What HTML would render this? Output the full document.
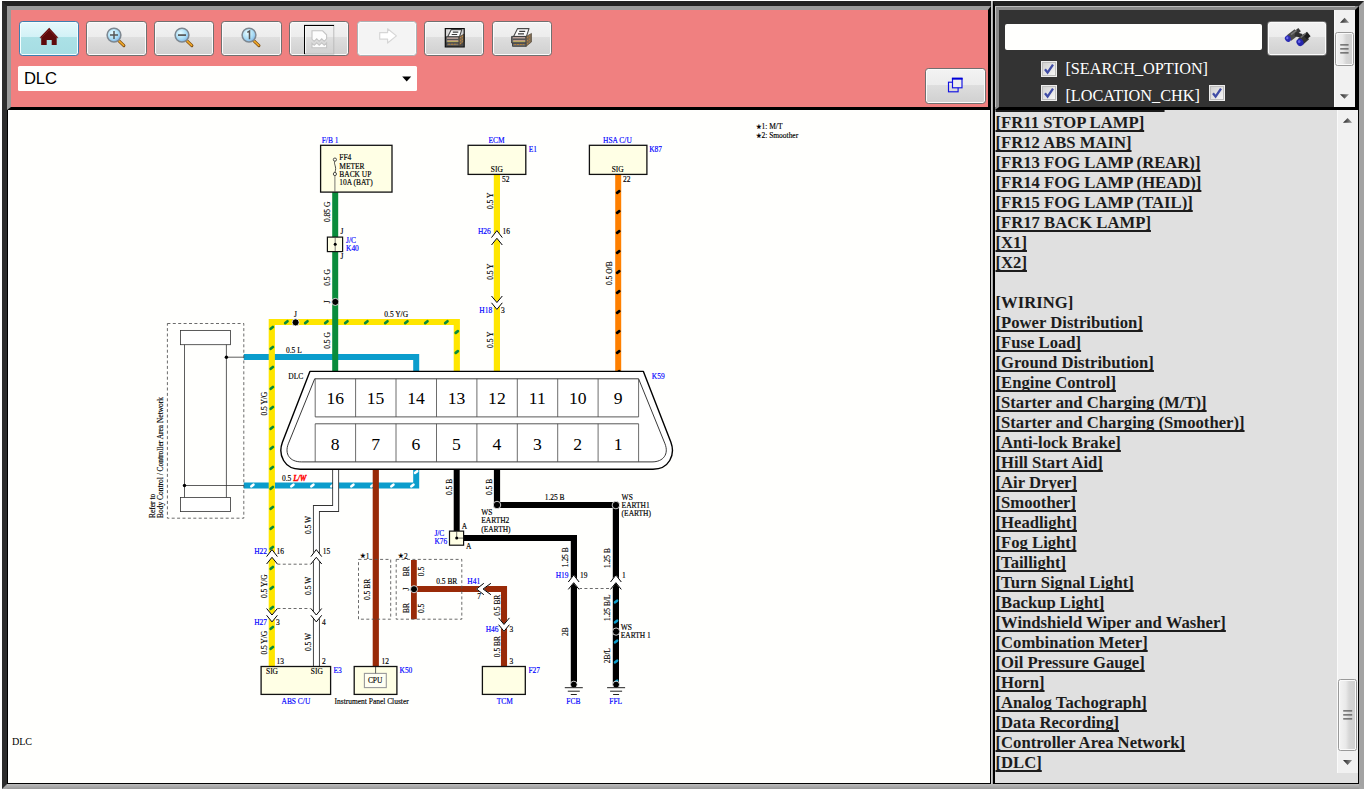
<!DOCTYPE html>
<html><head><meta charset="utf-8"><title>DLC</title><style>
html,body{margin:0;padding:0}
body{width:1366px;height:791px;position:relative;overflow:hidden;background:#fff;font-family:"Liberation Serif",serif}
.a{position:absolute}
.btn{position:absolute;box-sizing:border-box;width:60px;height:35px;top:21px;border:1px solid #707070;border-radius:3.5px;
 background:linear-gradient(#f3f3f3 0,#ececec 46%,#dedede 47%,#d0d0d0 100%);box-shadow:inset 0 0 0 1px #fbfbfb}
.btn svg{position:absolute;left:0;top:0}
.btn.hot{border-color:#3c7fb1;background:linear-gradient(#e6f9fc 0,#d2f1f6 46%,#abe1e6 47%,#a6dde3 100%);box-shadow:inset 0 0 0 1px #f4fdfe}
.btn.dis{border-color:#adb2b5;background:#f4f4f4;box-shadow:inset 0 0 0 1px #fcfcfc}
#list{position:absolute;left:995px;top:110px;width:363px;height:673px;background:#e0e0e0;overflow:hidden}
#list div{position:absolute;left:0.5px;white-space:nowrap;font:bold 16.67px/20px "Liberation Serif",serif;color:#1c1c1c;height:20px}
#list a{color:#1c1c1c;text-decoration:underline;text-decoration-thickness:1.5px;text-underline-offset:2.4px;text-decoration-skip-ink:none}
.lbl{position:absolute;color:#fff;font:16.25px/18px "Liberation Serif",serif;white-space:nowrap}
.cb{position:absolute;width:12px;height:12px;border:1px solid #bdbdbd;background:linear-gradient(135deg,#d2d2d2,#f6f6f6);outline:1px solid #ededed}
.sb{position:absolute;background:#f1f1f1;border-left:1px solid #fafafa;box-sizing:border-box}
.th{position:absolute;box-sizing:border-box;border:1px solid #9a9a9a;border-radius:2.5px;background:linear-gradient(90deg,#f4f4f4 0,#e9e9e9 40%,#d6d6d6 60%,#cfcfcf 100%);box-shadow:inset 0 0 0 1px #fafafa}
</style></head><body>
<div class="a" style="box-sizing:border-box;left:2px;top:1px;width:988.6px;height:788px;border-left:5.5px solid #2c2c2c;border-top:5px solid #222;border-bottom:5px solid #a6a6a6;background:#000"></div>
<div class="a" style="left:990.6px;top:1px;width:2.4px;height:788px;background:linear-gradient(90deg,#fff 0,#b5b5b5 35%,#a9a9a9)"></div>
<div class="a" style="left:990.6px;top:784px;width:2.4px;height:5px;background:#a6a6a6"></div>
<div class="a" style="box-sizing:border-box;left:993px;top:1px;width:371px;height:788px;border-left:2px solid #000;border-top:5px solid #222;border-right:5px solid #a3a3a3;border-bottom:5px solid #a6a6a6;background:#000"></div>
<div class="a" style="left:7px;top:784.2px;width:1352px;height:4.8px;background:linear-gradient(#bcbcbc,#989898)"></div>
<div class="a" style="box-sizing:border-box;left:7px;top:6px;width:983.5px;height:104px;border-top:4px solid #9a9a9a;border-left:4px solid #9a9a9a;border-bottom:3px solid #000;border-right:3.5px solid #000;background:#f08080"></div>
<div class="a" style="left:7.5px;top:110px;width:982.9px;height:673.4px;background:#fffffd"></div>
<div class="a" style="box-sizing:border-box;left:995px;top:6px;width:364px;height:104px;border-top:4px solid #8a8a8a;border-left:4px solid #8a8a8a;border-bottom:3px solid #000;border-right:4px solid #000;background:#333"></div>
<div class="a" style="left:995px;top:6px;width:1px;height:101px;background:#c4c4c4"></div>
<div class="a" style="left:995px;top:6px;width:360px;height:0.8px;background:#bdbdbd"></div>
<div class="btn hot" style="left:19.1px;width:59.8px"><svg width="60" height="35" viewBox="0 0 60 35"><g transform="translate(-0.8,-0.9)"><path d="M30 6.6 L20.3 16.6 H22 V24 H27.5 V18.8 H32.5 V24 H37.5 V16.6 H39.2 Z" fill="#5e0b0b"/><path d="M30 8.6 L21.6 17.2 M30 8.6 L38.4 17.2" stroke="#8a2a2a" stroke-width="0.8" fill="none"/></g></svg></div>
<div class="btn" style="left:86.4px;width:60.3px"><svg width="60" height="35" viewBox="0 0 60 35"><defs><radialGradient id="lg" cx="0.4" cy="0.35" r="0.7"><stop offset="0" stop-color="#e6fbff"/><stop offset="0.6" stop-color="#a9dcf5"/><stop offset="1" stop-color="#7fb2e6"/></radialGradient></defs><g transform="translate(-1.3,-0.9)"><line x1="33" y1="19.5" x2="38.2" y2="24.5" stroke="#7a4a10" stroke-width="3" stroke-linecap="round"/><line x1="33" y1="19.5" x2="38" y2="24.3" stroke="#f0a828" stroke-width="1.6" stroke-linecap="round"/><circle cx="28.3" cy="14" r="6.9" fill="url(#lg)" stroke="#7d8790" stroke-width="1.5"/><path d="M24.3 14 H32.3 M28.3 10 V18" stroke="#555" stroke-width="1.5"/></g></svg></div>
<div class="btn" style="left:154.1px;width:59.8px"><svg width="60" height="35" viewBox="0 0 60 35"><defs><radialGradient id="lg" cx="0.4" cy="0.35" r="0.7"><stop offset="0" stop-color="#e6fbff"/><stop offset="0.6" stop-color="#a9dcf5"/><stop offset="1" stop-color="#7fb2e6"/></radialGradient></defs><g transform="translate(-1.3,-0.9)"><line x1="33" y1="19.5" x2="38.2" y2="24.5" stroke="#7a4a10" stroke-width="3" stroke-linecap="round"/><line x1="33" y1="19.5" x2="38" y2="24.3" stroke="#f0a828" stroke-width="1.6" stroke-linecap="round"/><circle cx="28.3" cy="14" r="6.9" fill="url(#lg)" stroke="#7d8790" stroke-width="1.5"/><path d="M24.3 14 H32.3" stroke="#555" stroke-width="1.7"/></g></svg></div>
<div class="btn" style="left:221.4px;width:60.3px"><svg width="60" height="35" viewBox="0 0 60 35"><defs><radialGradient id="lg" cx="0.4" cy="0.35" r="0.7"><stop offset="0" stop-color="#e6fbff"/><stop offset="0.6" stop-color="#a9dcf5"/><stop offset="1" stop-color="#7fb2e6"/></radialGradient></defs><g transform="translate(-1.3,-0.9)"><line x1="33" y1="19.5" x2="38.2" y2="24.5" stroke="#7a4a10" stroke-width="3" stroke-linecap="round"/><line x1="33" y1="19.5" x2="38" y2="24.3" stroke="#f0a828" stroke-width="1.6" stroke-linecap="round"/><circle cx="28.3" cy="14" r="6.9" fill="url(#lg)" stroke="#7d8790" stroke-width="1.5"/><path d="M26.6 11.2 L28.8 10 V18.2" stroke="#555" stroke-width="1.5" fill="none"/></g></svg></div>
<div class="btn" style="left:289.2px;width:59.6px"><svg width="60" height="35" viewBox="0 0 60 35"><rect x="14.5" y="3" width="29.3" height="29" fill="none" stroke="#bdbdbd" stroke-width="1"/><path d="M15.6 31 V4.1 H43" stroke="#fafafa" stroke-width="1" fill="none"/><path d="M14.6 32 V3.1 H43.8" stroke="#000" stroke-width="1.2" fill="none" shape-rendering="crispEdges"/><path d="M22 8.8 H32.6 L36.6 12.8 V16.8 L34.2 19.3 L31.7 16.8 L29.2 19.3 L26.7 16.8 L24.2 19.3 L22 17.3 Z" fill="#fdfdfd" stroke="#c4c4c4" stroke-width="1.1"/><path d="M22 25.8 V21.3 L24.2 23.3 L26.7 20.8 L29.2 23.3 L31.7 20.8 L34.2 23.3 L36.6 20.8 V25.8 Z" fill="#fdfdfd" stroke="#c4c4c4" stroke-width="1.1"/></svg></div>
<div class="btn dis" style="left:356.5px;width:60.2px"><svg width="60" height="35" viewBox="0 0 60 35"><path d="M21.7 10.6 H29.6 V6.8 L38.4 13.9 L29.6 21 V17.2 H21.7 Z" fill="#fff" stroke="#d6d6d6" stroke-width="1.2" stroke-linejoin="round"/></svg></div>
<div class="btn" style="left:424.2px;width:59.6px"><svg width="60" height="35" viewBox="0 0 60 35"><defs><linearGradient id="pf" x1="0" x2="1"><stop offset="0" stop-color="#cfcfcf"/><stop offset="0.5" stop-color="#fafafa"/><stop offset="1" stop-color="#c9c9c9"/></linearGradient></defs><rect x="20.3" y="6.6" width="18.9" height="18.3" fill="url(#pf)"/><rect x="20.6" y="15" width="18.3" height="9.6" fill="#4a4a4a"/><path d="M26.3 7.6 L36.8 7.6 L34.4 15.0 L22.6 15.0 Z" fill="#fbfbfb" stroke="#4a4a4a" stroke-width="1.1" stroke-linejoin="round"/><path d="M27.8 10.2 L33.3 10.2 M26.7 12.5 L32.2 12.5" stroke="#3c3c3c" stroke-width="1.2"/><path d="M20.8 14.8 H34.2 V23.9 H21.6 V20.9 H20.8 Z" fill="#6e6e6e" stroke="#3a3a3a" stroke-width="0.9"/><path d="M34.2 14.8 L39.1 12.1 L39.1 19.9 L34.2 23.9 Z" fill="#7d6a52" stroke="#4a4030" stroke-width="0.6"/><path d="M35.2 15.7 L38.3 13.9 M35.2 18.9 L38.3 16.7 M35.2 21.8 L38.3 19.0" stroke="#d08a38" stroke-width="1" stroke-dasharray="1.1 1.1"/><path d="M22.1 16.1 H33.1" stroke="#e6c0b4" stroke-width="0.9"/><path d="M21.9 17.5 H33.5" stroke="#4e4e4e" stroke-width="0.9"/><path d="M22.3 18.8 H33.3" stroke="#e0aa8a" stroke-width="0.9"/><path d="M22.3 19.6 H33.3" stroke="#c4b860" stroke-width="0.9"/><path d="M21.4 21.0 H33.9" stroke="#333" stroke-width="0.9"/><path d="M23.2 22.3 H32.4" stroke="#b8803a" stroke-width="1.1" stroke-dasharray="2 0.8"/><rect x="20.3" y="6.6" width="18.9" height="18.3" fill="none" stroke="#0c0c0c" stroke-width="1.2"/></svg></div>
<div class="btn" style="left:491.5px;width:60.2px"><svg width="60" height="35" viewBox="0 0 60 35"><path d="M24.6 6.6 L36.0 6.6 L33.4 14.6 L20.6 14.6 Z" fill="#fbfbfb" stroke="#4a4a4a" stroke-width="1.1" stroke-linejoin="round"/><path d="M26.2 9.4 L32.2 9.4 M25.0 11.9 L31.0 11.9" stroke="#3c3c3c" stroke-width="1.2"/><path d="M18.6 14.4 H33.2 V24.3 H19.5 V21.0 H18.6 Z" fill="#6e6e6e" stroke="#3a3a3a" stroke-width="0.9"/><path d="M33.2 14.4 L38.5 11.4 L38.5 19.9 L33.2 24.3 Z" fill="#7d6a52" stroke="#4a4030" stroke-width="0.6"/><path d="M34.2 15.4 L37.6 13.4 M34.2 18.8 L37.6 16.4 M34.2 22.0 L37.6 19.0" stroke="#d08a38" stroke-width="1" stroke-dasharray="1.1 1.1"/><path d="M20.0 15.8 H32.0" stroke="#e6c0b4" stroke-width="0.9"/><path d="M19.8 17.3 H32.4" stroke="#4e4e4e" stroke-width="0.9"/><path d="M20.2 18.7 H32.2" stroke="#e0aa8a" stroke-width="0.9"/><path d="M20.2 19.6 H32.2" stroke="#c4b860" stroke-width="0.9"/><path d="M19.2 21.1 H32.8" stroke="#333" stroke-width="0.9"/><path d="M21.2 22.5 H31.2" stroke="#b8803a" stroke-width="1.1" stroke-dasharray="2 0.8"/></svg></div>
<div class="a" style="left:18px;top:66.2px;width:398.5px;height:24.5px;background:#fffffd;border-radius:1.5px"></div>
<div class="a" style="left:23.9px;top:66.5px;height:24px;font:16.6px/24.6px 'Liberation Sans',sans-serif;color:#000">DLC</div>
<svg class="a" style="left:401px;top:75px" width="12" height="8" viewBox="0 0 12 8"><path d="M1.2 1.5 H10.2 L5.7 6.5 Z" fill="#000"/></svg>
<div class="btn" style="left:925.4px;top:68.3px;height:35.4px;width:60.4px"><svg width="60" height="35" viewBox="0 0 60 35"><g transform="translate(-0.7,-1.0)"><rect x="23.2" y="14.2" width="9.6" height="9.6" fill="none" stroke="#1212e2" stroke-width="1.15"/><rect x="27.2" y="10.6" width="9.5" height="9.2" fill="#efefef" stroke="#1212e2" stroke-width="1.15"/><path d="M26.6 10.6 H37.3" stroke="#0000d8" stroke-width="2"/></g></svg></div>
<div class="a" style="left:1004.6px;top:24px;width:257px;height:26px;background:#fffffd;border-radius:2px"></div>
<div class="btn" style="left:1267.2px;top:21.2px;width:59.6px;height:34.6px"><svg width="60" height="35" viewBox="0 0 60 35"><path d="M21 16 L28.8 9.9" stroke="#4a4a4a" stroke-width="7"/><path d="M28.2 10.3 L31.6 7.6" stroke="#3a3a3a" stroke-width="4.2"/><path d="M27 12 L34 14" stroke="#2e2e2e" stroke-width="4"/><path d="M32.4 19.8 L38.6 14.4" stroke="#333" stroke-width="7.6"/><path d="M37 15.2 L40.8 12" stroke="#1c1c1c" stroke-width="5.6"/><path d="M23 12.6 L28.6 8.4" stroke="#777" stroke-width="1.4"/><path d="M32.6 15.6 L38 11.2" stroke="#6a6a6a" stroke-width="1.4"/><ellipse cx="19.9" cy="16.7" rx="2.9" ry="3.3" transform="rotate(-35 19.9 16.7)" fill="#2c2cb4"/><ellipse cx="32" cy="20.4" rx="3.4" ry="3.8" transform="rotate(-35 32 20.4)" fill="#2626ac"/><ellipse cx="19.3" cy="15.9" rx="1.1" ry="1.3" fill="#6e6eea"/><ellipse cx="31.2" cy="19.4" rx="1.3" ry="1.5" fill="#6464e6"/></svg></div>
<div class="cb" style="left:1042.1px;top:62px"><svg width="12" height="12" viewBox="1 1 12 12" style="position:absolute;left:0;top:0"><path d="M3 7.2 L5.6 10.6 L11 2.6" fill="none" stroke="#3f4ca6" stroke-width="2.3" stroke-linejoin="miter"/></svg></div>
<div class="cb" style="left:1042.1px;top:86px"><svg width="12" height="12" viewBox="1 1 12 12" style="position:absolute;left:0;top:0"><path d="M3 7.2 L5.6 10.6 L11 2.6" fill="none" stroke="#3f4ca6" stroke-width="2.3" stroke-linejoin="miter"/></svg></div>
<div class="cb" style="left:1210.1px;top:86px"><svg width="12" height="12" viewBox="1 1 12 12" style="position:absolute;left:0;top:0"><path d="M3 7.2 L5.6 10.6 L11 2.6" fill="none" stroke="#3f4ca6" stroke-width="2.3" stroke-linejoin="miter"/></svg></div>
<div class="lbl" style="left:1065.4px;top:59.7px">[SEARCH_OPTION]</div>
<div class="lbl" style="left:1065.4px;top:86.8px">[LOCATION_CHK]</div>
<div class="sb" style="left:1334px;top:10px;width:21px;height:97px"></div>
<svg class="a" style="left:1334px;top:10px" width="21" height="97" viewBox="0 0 21 97"><defs><linearGradient id="ar" x1="0" x2="1"><stop offset="0" stop-color="#222"/><stop offset="1" stop-color="#9a9a9a"/></linearGradient></defs><path d="M10.6 7.8 L15.2 12.8 H6 Z" fill="url(#ar)"/><path d="M6 84.2 H15 L10.5 88.8 Z" fill="url(#ar)"/></svg>
<div class="th" style="left:1335.4px;top:32.3px;width:18.6px;height:33.6px"></div>
<svg class="a" style="left:1339px;top:43px" width="12" height="12" viewBox="0 0 12 12"><path d="M1.2 1.9 H9.6 M1.2 5.9 H9.6 M1.2 9.9 H9.6" stroke="#555" stroke-width="1.1"/></svg>
<div id="list">
<div style="top:-16.55px"><a>[FR10 TURN SIGNAL]</a></div>
<div style="top:3.45px"><a>[FR11 STOP LAMP]</a></div>
<div style="top:23.45px"><a>[FR12 ABS MAIN]</a></div>
<div style="top:43.45px"><a>[FR13 FOG LAMP (REAR)]</a></div>
<div style="top:63.45px"><a>[FR14 FOG LAMP (HEAD)]</a></div>
<div style="top:83.45px"><a>[FR15 FOG LAMP (TAIL)]</a></div>
<div style="top:103.45px"><a>[FR17 BACK LAMP]</a></div>
<div style="top:123.45px"><a>[X1]</a></div>
<div style="top:143.45px"><a>[X2]</a></div>
<div style="top:183.45px">[WIRING]</div>
<div style="top:203.45px"><a>[Power Distribution]</a></div>
<div style="top:223.45px"><a>[Fuse Load]</a></div>
<div style="top:243.45px"><a>[Ground Distribution]</a></div>
<div style="top:263.45px"><a>[Engine Control]</a></div>
<div style="top:283.45px"><a>[Starter and Charging (M/T)]</a></div>
<div style="top:303.45px"><a>[Starter and Charging (Smoother)]</a></div>
<div style="top:323.45px"><a>[Anti-lock Brake]</a></div>
<div style="top:343.45px"><a>[Hill Start Aid]</a></div>
<div style="top:363.45px"><a>[Air Dryer]</a></div>
<div style="top:383.45px"><a>[Smoother]</a></div>
<div style="top:403.45px"><a>[Headlight]</a></div>
<div style="top:423.45px"><a>[Fog Light]</a></div>
<div style="top:443.45px"><a>[Taillight]</a></div>
<div style="top:463.45px"><a>[Turn Signal Light]</a></div>
<div style="top:483.45px"><a>[Backup Light]</a></div>
<div style="top:503.45px"><a>[Windshield Wiper and Washer]</a></div>
<div style="top:523.45px"><a>[Combination Meter]</a></div>
<div style="top:543.45px"><a>[Oil Pressure Gauge]</a></div>
<div style="top:563.45px"><a>[Horn]</a></div>
<div style="top:583.45px"><a>[Analog Tachograph]</a></div>
<div style="top:603.45px"><a>[Data Recording]</a></div>
<div style="top:623.45px"><a>[Controller Area Network]</a></div>
<div style="top:643.45px"><a>[DLC]</a></div>
</div>
<div class="sb" style="left:1337px;top:110px;width:21px;height:663px"></div>
<svg class="a" style="left:1337px;top:110px" width="21" height="663" viewBox="0 0 21 663"><path d="M10.6 7.9 L15.2 12.8 H6 Z" fill="url(#ar)"/><path d="M6 650 H15.2 L10.6 655 Z" fill="url(#ar)"/></svg>
<div class="th" style="left:1338.2px;top:679px;width:19px;height:71.6px"></div>
<svg class="a" style="left:1342px;top:709px" width="12" height="12" viewBox="0 0 12 12"><path d="M1.2 1.9 H10.2 M1.2 5.9 H10.2 M1.2 9.9 H10.2" stroke="#555" stroke-width="1.1"/></svg>
<svg id="dg" width="1366" height="791" viewBox="0 0 1366 791" font-family="'Liberation Serif',serif" style="position:absolute;left:0;top:0"><path d="M243.8 357 H416.2 V372" fill="none" stroke="#0b9dcc" stroke-width="6" stroke-linejoin="miter"/>
<path d="M243.8 485.5 H416.2 V468" fill="none" stroke="#0b9dcc" stroke-width="6" stroke-linejoin="miter"/>
<line x1="251.4" y1="486.3" x2="253.4" y2="484.7" stroke="#fff" stroke-width="2.7" stroke-linecap="round"/>
<line x1="271.4" y1="486.3" x2="273.4" y2="484.7" stroke="#fff" stroke-width="2.7" stroke-linecap="round"/>
<line x1="291.4" y1="486.3" x2="293.4" y2="484.7" stroke="#fff" stroke-width="2.7" stroke-linecap="round"/>
<line x1="311.4" y1="486.3" x2="313.4" y2="484.7" stroke="#fff" stroke-width="2.7" stroke-linecap="round"/>
<line x1="331.4" y1="486.3" x2="333.4" y2="484.7" stroke="#fff" stroke-width="2.7" stroke-linecap="round"/>
<line x1="351.4" y1="486.3" x2="353.4" y2="484.7" stroke="#fff" stroke-width="2.7" stroke-linecap="round"/>
<line x1="371.4" y1="486.3" x2="373.4" y2="484.7" stroke="#fff" stroke-width="2.7" stroke-linecap="round"/>
<line x1="391.4" y1="486.3" x2="393.4" y2="484.7" stroke="#fff" stroke-width="2.7" stroke-linecap="round"/>
<line x1="411.4" y1="486.3" x2="413.4" y2="484.7" stroke="#fff" stroke-width="2.7" stroke-linecap="round"/>
<line x1="415.2" y1="472.8" x2="417.2" y2="471.2" stroke="#fff" stroke-width="2.7" stroke-linecap="round"/>
<path d="M271.8 667 V322 H456.8 V372" fill="none" stroke="#ffe600" stroke-width="6.2" stroke-linejoin="miter"/>
<line x1="285.2" y1="323.1" x2="287.5" y2="321.3" stroke="#0a8c3c" stroke-width="2.7" stroke-linecap="round"/>
<line x1="305.2" y1="323.1" x2="307.5" y2="321.3" stroke="#0a8c3c" stroke-width="2.7" stroke-linecap="round"/>
<line x1="325.2" y1="323.1" x2="327.5" y2="321.3" stroke="#0a8c3c" stroke-width="2.7" stroke-linecap="round"/>
<line x1="345.2" y1="323.1" x2="347.5" y2="321.3" stroke="#0a8c3c" stroke-width="2.7" stroke-linecap="round"/>
<line x1="365.2" y1="323.1" x2="367.5" y2="321.3" stroke="#0a8c3c" stroke-width="2.7" stroke-linecap="round"/>
<line x1="385.2" y1="323.1" x2="387.5" y2="321.3" stroke="#0a8c3c" stroke-width="2.7" stroke-linecap="round"/>
<line x1="405.2" y1="323.1" x2="407.5" y2="321.3" stroke="#0a8c3c" stroke-width="2.7" stroke-linecap="round"/>
<line x1="425.2" y1="323.1" x2="427.5" y2="321.3" stroke="#0a8c3c" stroke-width="2.7" stroke-linecap="round"/>
<line x1="445.2" y1="323.1" x2="447.5" y2="321.3" stroke="#0a8c3c" stroke-width="2.7" stroke-linecap="round"/>
<line x1="270.7" y1="328.8" x2="272.9" y2="327.0" stroke="#0a8c3c" stroke-width="2.7" stroke-linecap="round"/>
<line x1="270.7" y1="348.8" x2="272.9" y2="347.0" stroke="#0a8c3c" stroke-width="2.7" stroke-linecap="round"/>
<line x1="270.7" y1="368.8" x2="272.9" y2="367.0" stroke="#0a8c3c" stroke-width="2.7" stroke-linecap="round"/>
<line x1="270.7" y1="388.8" x2="272.9" y2="387.0" stroke="#0a8c3c" stroke-width="2.7" stroke-linecap="round"/>
<line x1="270.7" y1="408.8" x2="272.9" y2="407.0" stroke="#0a8c3c" stroke-width="2.7" stroke-linecap="round"/>
<line x1="270.7" y1="428.8" x2="272.9" y2="427.0" stroke="#0a8c3c" stroke-width="2.7" stroke-linecap="round"/>
<line x1="270.7" y1="448.8" x2="272.9" y2="447.0" stroke="#0a8c3c" stroke-width="2.7" stroke-linecap="round"/>
<line x1="270.7" y1="468.8" x2="272.9" y2="467.0" stroke="#0a8c3c" stroke-width="2.7" stroke-linecap="round"/>
<line x1="270.7" y1="488.8" x2="272.9" y2="487.0" stroke="#0a8c3c" stroke-width="2.7" stroke-linecap="round"/>
<line x1="270.7" y1="508.8" x2="272.9" y2="507.0" stroke="#0a8c3c" stroke-width="2.7" stroke-linecap="round"/>
<line x1="270.7" y1="528.8" x2="272.9" y2="527.0" stroke="#0a8c3c" stroke-width="2.7" stroke-linecap="round"/>
<line x1="270.7" y1="548.8" x2="272.9" y2="547.0" stroke="#0a8c3c" stroke-width="2.7" stroke-linecap="round"/>
<line x1="270.7" y1="568.8" x2="272.9" y2="567.0" stroke="#0a8c3c" stroke-width="2.7" stroke-linecap="round"/>
<line x1="270.7" y1="588.8" x2="272.9" y2="587.0" stroke="#0a8c3c" stroke-width="2.7" stroke-linecap="round"/>
<line x1="270.7" y1="608.8" x2="272.9" y2="607.0" stroke="#0a8c3c" stroke-width="2.7" stroke-linecap="round"/>
<line x1="270.7" y1="628.8" x2="272.9" y2="627.0" stroke="#0a8c3c" stroke-width="2.7" stroke-linecap="round"/>
<line x1="270.7" y1="648.8" x2="272.9" y2="647.0" stroke="#0a8c3c" stroke-width="2.7" stroke-linecap="round"/>
<line x1="455.7" y1="332.9" x2="457.9" y2="331.1" stroke="#0a8c3c" stroke-width="2.7" stroke-linecap="round"/>
<line x1="455.7" y1="352.9" x2="457.9" y2="351.1" stroke="#0a8c3c" stroke-width="2.7" stroke-linecap="round"/>
<path d="M335.2 192 V372" fill="none" stroke="#0a8c3c" stroke-width="6"/>
<path d="M496.9 174 V372" fill="none" stroke="#ffe600" stroke-width="6.2"/>
<path d="M618.2 174 V372" fill="none" stroke="#ff8000" stroke-width="6"/>
<line x1="617.1" y1="192.8" x2="619.3" y2="191.2" stroke="#000" stroke-width="2.7" stroke-linecap="round"/>
<line x1="617.1" y1="212.8" x2="619.3" y2="211.2" stroke="#000" stroke-width="2.7" stroke-linecap="round"/>
<line x1="617.1" y1="232.8" x2="619.3" y2="231.2" stroke="#000" stroke-width="2.7" stroke-linecap="round"/>
<line x1="617.1" y1="252.8" x2="619.3" y2="251.2" stroke="#000" stroke-width="2.7" stroke-linecap="round"/>
<line x1="617.1" y1="272.8" x2="619.3" y2="271.2" stroke="#000" stroke-width="2.7" stroke-linecap="round"/>
<line x1="617.1" y1="292.8" x2="619.3" y2="291.2" stroke="#000" stroke-width="2.7" stroke-linecap="round"/>
<line x1="617.1" y1="312.8" x2="619.3" y2="311.2" stroke="#000" stroke-width="2.7" stroke-linecap="round"/>
<line x1="617.1" y1="332.8" x2="619.3" y2="331.2" stroke="#000" stroke-width="2.7" stroke-linecap="round"/>
<line x1="617.1" y1="352.8" x2="619.3" y2="351.2" stroke="#000" stroke-width="2.7" stroke-linecap="round"/>
<line x1="617.1" y1="372.8" x2="619.3" y2="371.2" stroke="#000" stroke-width="2.7" stroke-linecap="round"/>
<path d="M335.65 468 V508.5 H316.4 V667" fill="none" stroke="#333" stroke-width="6.9" stroke-linejoin="miter"/>
<path d="M335.65 467 V508.5 H316.4 V668" fill="none" stroke="#fff" stroke-width="5.1" stroke-linejoin="miter"/>
<path d="M375.8 468 V667" fill="none" stroke="#992a08" stroke-width="6.2"/>
<path d="M413.9 560 V619.2" fill="none" stroke="#992a08" stroke-width="5.8"/>
<path d="M413.9 589 H504 V667" fill="none" stroke="#992a08" stroke-width="6.1" stroke-linejoin="miter"/>
<path d="M456.7 468 V532" fill="none" stroke="#000" stroke-width="6"/>
<path d="M463 538 H573.9 V685" fill="none" stroke="#000" stroke-width="6.2" stroke-linejoin="miter"/>
<path d="M497 468 V505 H615.9 V685" fill="none" stroke="#000" stroke-width="6.2" stroke-linejoin="miter"/>
<line x1="615.1" y1="582.3" x2="617.1" y2="580.7" stroke="#0b9dcc" stroke-width="2.7" stroke-linecap="round"/>
<line x1="615.1" y1="602.3" x2="617.1" y2="600.7" stroke="#0b9dcc" stroke-width="2.7" stroke-linecap="round"/>
<line x1="615.1" y1="622.3" x2="617.1" y2="620.7" stroke="#0b9dcc" stroke-width="2.7" stroke-linecap="round"/>
<line x1="615.1" y1="642.3" x2="617.1" y2="640.7" stroke="#0b9dcc" stroke-width="2.7" stroke-linecap="round"/>
<line x1="615.1" y1="662.3" x2="617.1" y2="660.7" stroke="#0b9dcc" stroke-width="2.7" stroke-linecap="round"/>
<line x1="615.1" y1="682.3" x2="617.1" y2="680.7" stroke="#0b9dcc" stroke-width="2.7" stroke-linecap="round"/>
<rect x="167.4" y="323.5" width="76.4" height="194.7" stroke="#505050" stroke-width="0.85" stroke-dasharray="3 2.4" fill="none"/>
<rect x="358.5" y="559.4" width="32.2" height="59.8" stroke="#505050" stroke-width="0.85" stroke-dasharray="3 2.4" fill="none"/>
<rect x="396.2" y="559.4" width="65.6" height="59.8" stroke="#505050" stroke-width="0.85" stroke-dasharray="3 2.4" fill="none"/>
<path d="M277.4 564.2 H311 M277.4 608.5 H311 M579 588.5 H611" stroke="#505050" stroke-width="0.85" stroke-dasharray="3 2.4" fill="none"/>
<polygon points="491.5,237.6 496.9,230.6 502.29999999999995,237.6 502.29999999999995,245.0 496.9,238.29999999999998 491.5,245.0" fill="#fff" stroke="#fff" stroke-width="0.8"/><path d="M491.5 237.6 L496.9 230.6 L502.29999999999995 237.6 M491.5 245.0 L496.9 238.29999999999998 L502.29999999999995 245.0" fill="none" stroke="#000" stroke-width="1"/>
<polygon points="491.5,296 496.9,302.5 502.29999999999995,296 502.29999999999995,302.8 496.9,309.4 491.5,302.8" fill="#fff" stroke="#fff" stroke-width="0.8"/><path d="M491.5 296 L496.9 302.5 L502.29999999999995 296 M491.5 302.8 L496.9 309.4 L502.29999999999995 302.8" fill="none" stroke="#000" stroke-width="1"/>
<polygon points="266.6,556.6 272,549.6 277.4,556.6 277.4,564.0 272,557.3000000000001 266.6,564.0" fill="#fff" stroke="#fff" stroke-width="0.8"/><path d="M266.6 556.6 L272 549.6 L277.4 556.6 M266.6 564.0 L272 557.3000000000001 L277.4 564.0" fill="none" stroke="#000" stroke-width="1"/>
<polygon points="310.90000000000003,556.6 316.3,549.6 321.7,556.6 321.7,564.0 316.3,557.3000000000001 310.90000000000003,564.0" fill="#fff" stroke="#fff" stroke-width="0.8"/><path d="M310.90000000000003 556.6 L316.3 549.6 L321.7 556.6 M310.90000000000003 564.0 L316.3 557.3000000000001 L321.7 564.0" fill="none" stroke="#000" stroke-width="1"/>
<polygon points="266.6,608.5 272,615.0 277.4,608.5 277.4,615.3 272,621.9 266.6,615.3" fill="#fff" stroke="#fff" stroke-width="0.8"/><path d="M266.6 608.5 L272 615.0 L277.4 608.5 M266.6 615.3 L272 621.9 L277.4 615.3" fill="none" stroke="#000" stroke-width="1"/>
<polygon points="310.90000000000003,608.5 316.3,615.0 321.7,608.5 321.7,615.3 316.3,621.9 310.90000000000003,615.3" fill="#fff" stroke="#fff" stroke-width="0.8"/><path d="M310.90000000000003 608.5 L316.3 615.0 L321.7 608.5 M310.90000000000003 615.3 L316.3 621.9 L321.7 615.3" fill="none" stroke="#000" stroke-width="1"/>
<polygon points="568.3000000000001,582 573.7,575 579.1,582 579.1,589.4 573.7,582.7 568.3000000000001,589.4" fill="#fff" stroke="#fff" stroke-width="0.8"/><path d="M568.3000000000001 582 L573.7 575 L579.1 582 M568.3000000000001 589.4 L573.7 582.7 L579.1 589.4" fill="none" stroke="#000" stroke-width="1"/>
<polygon points="610.5,582 615.9,575 621.3,582 621.3,589.4 615.9,582.7 610.5,589.4" fill="#fff" stroke="#fff" stroke-width="0.8"/><path d="M610.5 582 L615.9 575 L621.3 582 M610.5 589.4 L615.9 582.7 L621.3 589.4" fill="none" stroke="#000" stroke-width="1"/>
<polygon points="498.6,617.9 504,624.4 509.4,617.9 509.4,624.6999999999999 504,631.3 498.6,624.6999999999999" fill="#fff" stroke="#fff" stroke-width="0.8"/><path d="M498.6 617.9 L504 624.4 L509.4 617.9 M498.6 624.6999999999999 L504 631.3 L509.4 624.6999999999999" fill="none" stroke="#000" stroke-width="1"/>
<polygon points="483.8,583.3 476.5,589 483.8,594.7 490.9,594.7 483.1,589 490.9,583.3" fill="#fff" stroke="#fff" stroke-width="0.8"/><path d="M483.8 583.3 L476.5 589 L483.8 594.7 M490.9 583.3 L483.1 589 L490.9 594.7" fill="none" stroke="#000" stroke-width="1"/>
<rect x="320.6" y="145.3" width="71.4" height="46.8" fill="#ffffe5" stroke="#111" stroke-width="1.3"/>
<rect x="468.1" y="145.3" width="57.7" height="29.1" fill="#ffffe5" stroke="#111" stroke-width="1.3"/>
<rect x="589.4" y="145.3" width="57.5" height="29.1" fill="#ffffe5" stroke="#111" stroke-width="1.3"/>
<rect x="261.1" y="666.5" width="69.5" height="27.9" fill="#ffffe5" stroke="#111" stroke-width="1.3"/>
<rect x="354.2" y="666.5" width="42.7" height="27.9" fill="#ffffe5" stroke="#111" stroke-width="1.3"/>
<rect x="482.4" y="666.5" width="42.9" height="27.9" fill="#ffffe5" stroke="#111" stroke-width="1.3"/>
<rect x="327.4" y="237.1" width="15.2" height="14.5" fill="#ffffe5" stroke="#111" stroke-width="1.2"/>
<rect x="449.5" y="531.1" width="14.1" height="14.1" fill="#ffffe5" stroke="#111" stroke-width="1.2"/>
<path d="M334.9 175.6 V192" stroke="#555" stroke-width="0.8" fill="none"/>
<path d="M334.9 161.2 C333.2 164,337.2 166.5,334.9 172.4" stroke="#222" stroke-width="0.8" fill="none"/>
<circle cx="334.9" cy="159.6" r="1.6" fill="#fffff0" stroke="#222" stroke-width="0.8"/>
<circle cx="334.9" cy="174" r="1.6" fill="#fffff0" stroke="#222" stroke-width="0.8"/>
<path d="M335.2 237.5 V251.2" stroke="#444" stroke-width="0.7"/>
<circle cx="335.2" cy="244.3" r="1.5" fill="#000"/>
<path d="M456.7 531.5 V538.1 H463.2" stroke="#333" stroke-width="0.7" fill="none"/>
<circle cx="456.7" cy="538.1" r="1.5" fill="#000"/>
<rect x="364.4" y="673.4" width="21.9" height="14.2" fill="#fffff2" stroke="#999" stroke-width="1.1"/>
<path d="M375.6 667 V673.3" stroke="#333" stroke-width="0.8"/>
<rect x="180.4" y="330.4" width="50" height="14.3" stroke="#333" stroke-width="0.8" fill="#fff"/>
<rect x="180.4" y="497.4" width="50.1" height="14.2" stroke="#333" stroke-width="0.8" fill="#fff"/>
<path d="M184.5 344.7 V497.4 M226.4 344.7 V497.4 M226.4 357.2 H243.8 M184.5 485.5 H243.8" stroke="#333" stroke-width="0.8" fill="none"/>
<circle cx="226.4" cy="357.2" r="1.7" fill="#000"/><circle cx="184.5" cy="485.5" r="1.7" fill="#000"/>
<circle cx="335.3" cy="301.9" r="3.55" fill="#000" stroke="#fff" stroke-width="0.8"/>
<circle cx="295.6" cy="322.4" r="3.55" fill="#000" stroke="#fff" stroke-width="0.8"/>
<circle cx="414" cy="589.2" r="3.55" fill="#000" stroke="#fff" stroke-width="0.8"/>
<circle cx="497" cy="505" r="3.75" fill="#000" stroke="#fff" stroke-width="0.8"/>
<circle cx="615.9" cy="505.1" r="3.75" fill="#000" stroke="#fff" stroke-width="0.8"/>
<circle cx="616.1" cy="631.6" r="3.65" fill="#000" stroke="#fff" stroke-width="0.8"/>
<circle cx="573.8" cy="684.6" r="3.45" fill="#000" stroke="#fff" stroke-width="0.8"/>
<circle cx="616.1" cy="684.6" r="3.45" fill="#000" stroke="#fff" stroke-width="0.8"/>
<path d="M564.8 687.7 H582.8 M567.8 691.2 H579.8 M570.8 694.5 H576.8" stroke="#222" stroke-width="1" fill="none"/>
<path d="M607.1 687.7 H625.1 M610.1 691.2 H622.1 M613.1 694.5 H619.1" stroke="#222" stroke-width="1" fill="none"/>
<path d="M309.9 371.4 H643.4 L670.9 442.2 C675.6 455,669 469.2,653 469.2 H300.3 C284.3 469.2,277.7 455,282.4 442.2 Z" fill="#fff" stroke="#000" stroke-width="1.4" stroke-linejoin="round"/>
<path d="M314.7 378.8 H638.6 L665 443.8 C669 454,663.5 461.9,652 461.9 H301.3 C289.8 461.9,284.3 454,288.3 443.8 Z" fill="none" stroke="#222" stroke-width="0.9" stroke-linejoin="round"/>
<path d="M315.2 416.9 H638.6 M315.2 423.8 H638.6" stroke="#444" stroke-width="0.9" fill="none"/>
<path d="M315.2 378.8 V416.9 M315.2 423.8 V461.9 M355.6 378.8 V416.9 M355.6 423.8 V461.9 M396.0 378.8 V416.9 M396.0 423.8 V461.9 M436.5 378.8 V416.9 M436.5 423.8 V461.9 M476.9 378.8 V416.9 M476.9 423.8 V461.9 M517.3 378.8 V416.9 M517.3 423.8 V461.9 M557.7 378.8 V416.9 M557.7 423.8 V461.9 M598.1 378.8 V416.9 M598.1 423.8 V461.9 M638.6 378.8 V416.9 M638.6 423.8 V461.9 " stroke="#484848" stroke-width="0.8" fill="none"/>
<g font-size="17.6" text-anchor="middle"><text x="335.2" y="403.7">16</text><text x="375.6" y="403.7">15</text><text x="416.0" y="403.7">14</text><text x="456.5" y="403.7">13</text><text x="496.9" y="403.7">12</text><text x="537.3" y="403.7">11</text><text x="577.7" y="403.7">10</text><text x="618.1" y="403.7">9</text><text x="335.2" y="449.5">8</text><text x="375.6" y="449.5">7</text><text x="416.0" y="449.5">6</text><text x="456.5" y="449.5">5</text><text x="496.9" y="449.5">4</text><text x="537.3" y="449.5">3</text><text x="577.7" y="449.5">2</text><text x="618.1" y="449.5">1</text></g>
<g font-size="8.3" stroke="#000" stroke-width="0.16"><text transform="translate(321.7,142.7) scale(0.9,1)" fill="#0000ff" stroke="#0000ff">F/B 1</text><text transform="translate(488.4,142.7) scale(0.9,1)" fill="#0000ff" stroke="#0000ff">ECM</text><text transform="translate(528.7,151.5) scale(0.9,1)" fill="#0000ff" stroke="#0000ff">E1</text><text transform="translate(603.0,142.7) scale(0.9,1)" fill="#0000ff" stroke="#0000ff">HSA C/U</text><text transform="translate(649.2,151.7) scale(0.9,1)" fill="#0000ff" stroke="#0000ff">K87</text><text transform="translate(477.9,233.6) scale(0.9,1)" fill="#0000ff" stroke="#0000ff">H26</text><text transform="translate(479.3,313.4) scale(0.9,1)" fill="#0000ff" stroke="#0000ff">H18</text><text transform="translate(346.0,242.7) scale(0.9,1)" fill="#0000ff" stroke="#0000ff">J/C</text><text transform="translate(346.0,250.6) scale(0.9,1)" fill="#0000ff" stroke="#0000ff">K40</text><text transform="translate(651.8,378.8) scale(0.9,1)" fill="#0000ff" stroke="#0000ff">K59</text><text transform="translate(254.2,553.5) scale(0.9,1)" fill="#0000ff" stroke="#0000ff">H22</text><text transform="translate(254.2,624.6) scale(0.9,1)" fill="#0000ff" stroke="#0000ff">H27</text><text transform="translate(333.4,672.5) scale(0.9,1)" fill="#0000ff" stroke="#0000ff">E3</text><text transform="translate(399.5,672.5) scale(0.9,1)" fill="#0000ff" stroke="#0000ff">K50</text><text transform="translate(281.5,703.8) scale(0.9,1)" fill="#0000ff" stroke="#0000ff">ABS C/U</text><text transform="translate(434.4,535.6) scale(0.9,1)" fill="#0000ff" stroke="#0000ff">J/C</text><text transform="translate(434.4,543.7) scale(0.9,1)" fill="#0000ff" stroke="#0000ff">K76</text><text transform="translate(467.3,583.9) scale(0.9,1)" fill="#0000ff" stroke="#0000ff">H41</text><text transform="translate(485.7,631.5) scale(0.9,1)" fill="#0000ff" stroke="#0000ff">H46</text><text transform="translate(555.7,577.7) scale(0.9,1)" fill="#0000ff" stroke="#0000ff">H19</text><text transform="translate(528.4,672.5) scale(0.9,1)" fill="#0000ff" stroke="#0000ff">F27</text><text transform="translate(496.8,703.8) scale(0.9,1)" fill="#0000ff" stroke="#0000ff">TCM</text><text transform="translate(566.3,703.8) scale(0.9,1)" fill="#0000ff" stroke="#0000ff">FCB</text><text transform="translate(609.3,703.8) scale(0.9,1)" fill="#0000ff" stroke="#0000ff">FFL</text><text transform="translate(339.3,160.3) scale(0.9,1)">FF4</text><text transform="translate(339.3,168.7) scale(0.9,1)">METER</text><text transform="translate(339.3,176.7) scale(0.9,1)">BACK UP</text><text transform="translate(339.3,185.0) scale(0.9,1)">10A (BAT)</text><text transform="translate(490.8,171.8) scale(0.9,1)">SIG</text><text transform="translate(611.7,171.8) scale(0.9,1)">SIG</text><text transform="translate(502.0,181.6) scale(0.9,1)">52</text><text transform="translate(623.0,181.6) scale(0.9,1)">22</text><text transform="translate(502.5,233.6) scale(0.9,1)">16</text><text transform="translate(501.0,313.4) scale(0.9,1)">3</text><text transform="translate(340.5,234.3) scale(0.9,1)">J</text><text transform="translate(340.5,259.0) scale(0.9,1)">J</text><text transform="translate(293.9,317.1) scale(0.9,1)">J</text><text transform="translate(384.3,317.3) scale(0.9,1)">0.5 Y/G</text><text transform="translate(286.0,352.8) scale(0.9,1)">0.5 L</text><text transform="translate(288.3,378.7) scale(0.9,1)">DLC</text><text transform="translate(282.0,480.6) scale(0.9,1)">0.5</text><text transform="translate(276.4,553.5) scale(0.9,1)">16</text><text transform="translate(322.8,553.5) scale(0.9,1)">15</text><text transform="translate(276.0,624.6) scale(0.9,1)">3</text><text transform="translate(322.1,624.6) scale(0.9,1)">4</text><text transform="translate(276.4,663.7) scale(0.9,1)">13</text><text transform="translate(322.1,663.7) scale(0.9,1)">2</text><text transform="translate(381.5,663.7) scale(0.9,1)">12</text><text transform="translate(266.0,673.7) scale(0.9,1)">SIG</text><text transform="translate(310.8,673.7) scale(0.9,1)">SIG</text><text transform="translate(367.9,683.0) scale(0.9,1)">CPU</text><text transform="translate(334.6,703.8) scale(0.9,1)">Instrument Panel Cluster</text><text transform="translate(360.2,558.6) scale(0.9,1)"><tspan font-size="6.8" dy="-0.3">★</tspan><tspan dy="0.3" dx="0.9">1</tspan></text><text transform="translate(398.4,558.6) scale(0.9,1)"><tspan font-size="6.8" dy="-0.3">★</tspan><tspan dy="0.3" dx="0.9">2</tspan></text><text transform="translate(436.2,583.9) scale(0.9,1)">0.5 BR</text><text transform="translate(477.2,598.5) scale(0.9,1)">7</text><text transform="translate(509.5,631.5) scale(0.9,1)">3</text><text transform="translate(509.5,663.5) scale(0.9,1)">3</text><text transform="translate(461.8,528.8) scale(0.9,1)">A</text><text transform="translate(466.0,548.8) scale(0.9,1)">A</text><text transform="translate(481.2,514.7) scale(0.9,1)">WS</text><text transform="translate(481.2,522.9) scale(0.9,1)">EARTH2</text><text transform="translate(481.2,531.7) scale(0.9,1)">(EARTH)</text><text transform="translate(544.7,499.7) scale(0.9,1)">1.25 B</text><text transform="translate(621.6,499.8) scale(0.9,1)">WS</text><text transform="translate(621.6,507.9) scale(0.9,1)">EARTH1</text><text transform="translate(621.6,515.9) scale(0.9,1)">(EARTH)</text><text transform="translate(579.9,577.7) scale(0.9,1)">19</text><text transform="translate(622.0,577.5) scale(0.9,1)">1</text><text transform="translate(620.7,629.7) scale(0.9,1)">WS</text><text transform="translate(620.7,637.8) scale(0.9,1)">EARTH 1</text><text transform="translate(756.0,128.9) scale(0.9,1)"><tspan font-size="6.8" dy="-0.3">★</tspan><tspan dy="0.3" dx="0.9">1: M/T</tspan></text><text transform="translate(756.0,137.8) scale(0.9,1)"><tspan font-size="6.8" dy="-0.3">★</tspan><tspan dy="0.3" dx="0.9">2: Smoother</tspan></text><text transform="translate(293.2,480.6) scale(0.9,1)" fill="#ff0000" stroke="#ff0000" font-weight="bold" font-style="italic" stroke-width="0.35">L/W</text><text transform="translate(329.8,222.0) rotate(-90) scale(0.9,1)">0.85 G</text><text transform="translate(329.7,285.8) rotate(-90) scale(0.9,1)">0.5 G</text><text transform="translate(329.9,348.8) rotate(-90) scale(0.9,1)">0.5 G</text><text transform="translate(493.1,209.0) rotate(-90) scale(0.9,1)">0.5 Y</text><text transform="translate(493.1,279.8) rotate(-90) scale(0.9,1)">0.5 Y</text><text transform="translate(493.2,347.9) rotate(-90) scale(0.9,1)">0.5 Y</text><text transform="translate(611.9,285.0) rotate(-90) scale(0.9,1)">0.5 O/B</text><text transform="translate(267.4,415.5) rotate(-90) scale(0.9,1)">0.5 Y/G</text><text transform="translate(267.1,598.0) rotate(-90) scale(0.9,1)">0.5 Y/G</text><text transform="translate(267.1,654.6) rotate(-90) scale(0.9,1)">0.5 Y/G</text><text transform="translate(311.4,534.0) rotate(-90) scale(0.9,1)">0.5 W</text><text transform="translate(311.4,594.9) rotate(-90) scale(0.9,1)">0.5 W</text><text transform="translate(311.4,651.0) rotate(-90) scale(0.9,1)">0.5 W</text><text transform="translate(370.1,600.0) rotate(-90) scale(0.9,1)">0.5 BR</text><text transform="translate(409.2,576.2) rotate(-90) scale(0.9,1)">BR</text><text transform="translate(424.2,576.2) rotate(-90) scale(0.9,1)">0.5</text><text transform="translate(409.2,613.0) rotate(-90) scale(0.9,1)">BR</text><text transform="translate(424.2,613.0) rotate(-90) scale(0.9,1)">0.5</text><text transform="translate(408.5,590.5) rotate(-90) scale(0.9,1)">J</text><text transform="translate(330.4,303.3) rotate(-90) scale(0.9,1)">J</text><text transform="translate(451.5,495.0) rotate(-90) scale(0.9,1)">0.5 B</text><text transform="translate(491.8,495.0) rotate(-90) scale(0.9,1)">0.5 B</text><text transform="translate(568.0,567.2) rotate(-90) scale(0.9,1)">1.25 B</text><text transform="translate(610.1,568.0) rotate(-90) scale(0.9,1)">1.25 B</text><text transform="translate(499.5,615.8) rotate(-90) scale(0.9,1)">0.5 BR</text><text transform="translate(499.5,657.2) rotate(-90) scale(0.9,1)">0.5 BR</text><text transform="translate(568.1,636.0) rotate(-90) scale(0.9,1)">2B</text><text transform="translate(609.9,621.0) rotate(-90) scale(0.9,1)">1.25 B/L</text><text transform="translate(609.9,663.2) rotate(-90) scale(0.9,1)">2B/L</text><text transform="translate(155.3,518.0) rotate(-90) scale(0.9,1)">Refer to</text><text transform="translate(163.3,518.0) rotate(-90) scale(0.9,1)">Body Control / Controller Area Network</text></g>
<text transform="translate(11.9,744.9) scale(1,1)" font-size="10.1">DLC</text></svg>
</body></html>
